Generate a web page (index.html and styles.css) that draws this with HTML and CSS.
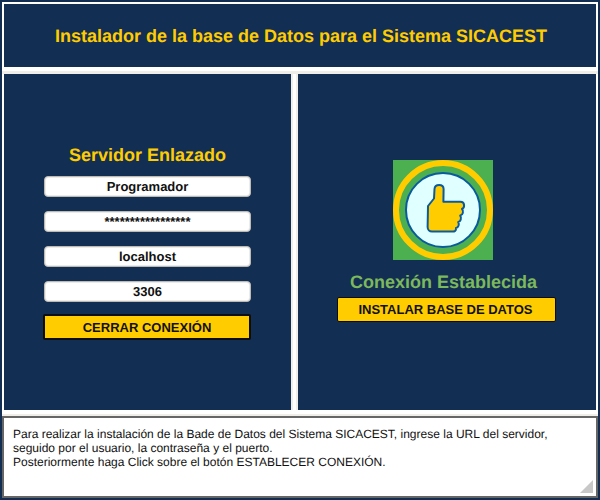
FILE: index.html
```html
<!DOCTYPE html>
<html lang="es">
<head>
  <meta charset="UTF-8">
  <title>Instalador SICACEST</title>
  <link rel="stylesheet" href="styles.css">
</head>
<body>
  <div class="app">
    <header class="header">
      <h1>Instalador de la base de Datos para el Sistema SICACEST</h1>
    </header>

    <main class="columns">
      <section class="panel panel-left">
        <h2>Servidor Enlazado</h2>
        <div class="field">Programador</div>
        <div class="field">*****************</div>
        <div class="field">localhost</div>
        <div class="field field-last">3306</div>
        <button class="btn btn-close" type="button">CERRAR CONEXIÓN</button>
      </section>

      <section class="panel panel-right">
        <svg class="status-icon" viewBox="0 0 100 100" width="100" height="100">
          <rect width="100" height="100" fill="#4caf50"/>
          <circle cx="50" cy="50" r="47" fill="none" stroke="#ffcc00" stroke-width="6"/>
          <circle cx="50" cy="50" r="37" fill="#e0ffff" stroke="#0a5a9e" stroke-width="2"/>
          <path d="M35 46 L41 38.5 L41.5 29 C41.8 23.8 50.5 23.8 50.6 29 L50.4 41.7 L67.5 41.7 C72 41.7 72 47.5 69 49 C71 51 70 55 67.2 55.6 C69 58 67.5 61.6 65.2 62 C66.5 64.5 65.5 67.5 63 68 L63 69 C63 70.5 61.5 71.6 60 71.6 L39 71.6 C36.5 71.6 34.6 69.5 34.6 67 Z" fill="#ffcc00" stroke="#0a5a9e" stroke-width="2" stroke-linejoin="round"/>
        </svg>
        <h3>Conexión Establecida</h3>
        <button class="btn btn-install" type="button">INSTALAR BASE DE DATOS</button>
      </section>
    </main>

    <footer class="help">
      Para realizar la instalación de la Bade de Datos del Sistema SICACEST, ingrese la URL del servidor,<br>
      seguido por el usuario, la contraseña y el puerto.<br>
      Posteriormente haga Click sobre el botón ESTABLECER CONEXIÓN.
    </footer>
  </div>
</body>
</html>
```

FILE: styles.css
```css
html, body {
  margin: 0;
  height: 100%;
}

body {
  background-color: #132e53;
  font-family: "Liberation Sans", Arial, sans-serif;
  text-rendering: geometricPrecision;
  overflow: hidden;
}

.app {
  box-sizing: border-box;
  width: 596px;
  height: 496px;
  margin: 2px;
  padding-top: 2px;
  background-color: #fff;
  display: flex;
  flex-direction: column;
}

.header {
  box-sizing: border-box;
  height: 63px;
  margin: 0 2px 4px;
  padding: 2px 0 0 2px;
  background-color: #132e53;
  display: flex;
  align-items: center;
  justify-content: center;
}

h1 {
  margin: 0;
  color: #ffcc00;
  font-size: 18px;
  font-weight: bold;
}

.columns {
  height: 340px;
  border-top: 3px solid #f0eee9;
  border-bottom: 2px solid #f0eee9;
  padding: 0 2px;
  display: flex;
  gap: 3px;
}

.panel {
  box-sizing: border-box;
  height: 336px;
  background-color: #132e53;
  display: flex;
  flex-direction: column;
  align-items: center;
  justify-content: center;
}

.panel-left {
  width: 289px;
  border-right: 2px solid #f0eee9;
}

.panel-right {
  width: 300px;
  padding-bottom: 2px;
  border-left: 2px solid #f0eee9;
}

h2 {
  margin: 0 0 9px;
  color: #ffcc00;
  font-size: 18px;
  line-height: 23px;
  font-weight: bold;
}

.field {
  box-sizing: border-box;
  width: 207px;
  height: 21px;
  margin-bottom: 14px;
  border: 1px solid #bdbab4;
  border-radius: 4px;
  box-shadow: inset 0 0 0 1px #eeece8;
  background-color: #fff;
  color: #111;
  font-size: 13px;
  font-weight: bold;
  line-height: 19px;
  text-align: center;
}

.field-last {
  margin-bottom: 12px;
}

.btn {
  box-sizing: border-box;
  background-color: #ffcc00;
  color: #111;
  font-family: inherit;
  font-size: 13px;
  font-weight: bold;
  padding: 0;
}

.btn-close {
  width: 208px;
  height: 26px;
  margin-left: -1px;
  border: 2px solid #0d0d0d;
  border-radius: 2px;
}

.btn-install {
  width: 219px;
  height: 25px;
  margin-right: 1px;
  padding-right: 2px;
  border: 1px solid #0d0d0d;
  border-radius: 2px;
}

.status-icon {
  display: block;
  margin-right: 8px;
}

h3 {
  margin: 11px 7px 4px 0;
  color: #7cb85c;
  font-size: 18px;
  line-height: 22px;
  font-weight: bold;
}

.help {
  position: relative;
  box-sizing: border-box;
  height: 82px;
  border: 2px solid #666;
  background-color: #fff;
  padding: 9px 9px 0;
  color: #111;
  font-size: 12px;
  line-height: 14px;
}

/* grip de la esquina */
.help::after {
  content: "";
  position: absolute;
  right: 3px;
  bottom: 3px;
  width: 13px;
  height: 13px;
  background-color: #c8c8c8;
  clip-path: polygon(100% 0, 100% 100%, 0 100%);
}
```
